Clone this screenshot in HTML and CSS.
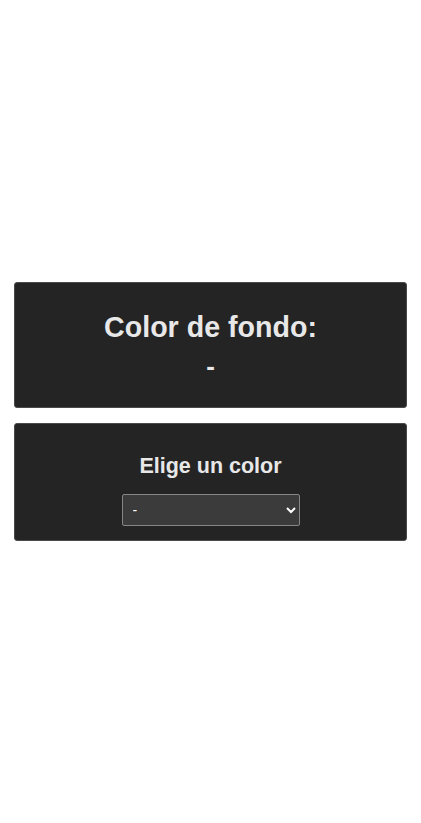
FILE: index.html
```html
<!DOCTYPE html>
<html lang="es">
<head>
<meta charset="utf-8">
<title>Color de fondo</title>
<link rel="stylesheet" href="styles.css">
</head>
<body>
<main class="page">
  <section class="card card-result">
    <h1 class="title">Color de fondo:</h1>
    <p class="value">-</p>
  </section>
  <section class="card card-pick">
    <h2 class="subtitle">Elige un color</h2>
    <select class="picker">
      <option>-</option>
      <option>Rojo</option>
      <option>Verde</option>
      <option>Azul</option>
    </select>
  </section>
</main>
</body>
</html>
```
FILE: styles.css
```css
html, body {
  margin: 0;
  padding: 0;
  background: #ffffff;
}
body {
  font-family: "Liberation Sans", Arial, sans-serif;
}
.page {
  min-height: 100vh;
  box-sizing: border-box;
  padding: 0 14px;
  display: flex;
  flex-direction: column;
  justify-content: center;
  gap: 15px;
}
.card {
  background: #242424;
  border: 1px solid #4a4a4a;
  border-radius: 3px;
  color: #e8e8e8;
  display: flex;
  flex-direction: column;
  align-items: center;
  box-sizing: border-box;
}
.card-result {
  height: 126px;
  padding-top: 28px;
  gap: 8px;
}
.title {
  margin: 0;
  font-size: 28.6px;
  line-height: 32px;
  font-weight: bold;
}
.value {
  margin: 0;
  font-size: 26px;
  line-height: 30px;
  font-weight: bold;
}
.card-pick {
  height: 118px;
  padding-top: 29px;
  gap: 15px;
}
.subtitle {
  margin: 0;
  font-size: 21.5px;
  line-height: 26px;
  font-weight: bold;
}
.picker {
  width: 178px;
  height: 32px;
  background: #3b3b3b;
  color: #ffffff;
  border: 1px solid #858585;
  border-radius: 2px;
  font-family: "Liberation Sans", Arial, sans-serif;
  font-size: 14px;
  padding: 0 6px;
  color-scheme: dark;
}
```
